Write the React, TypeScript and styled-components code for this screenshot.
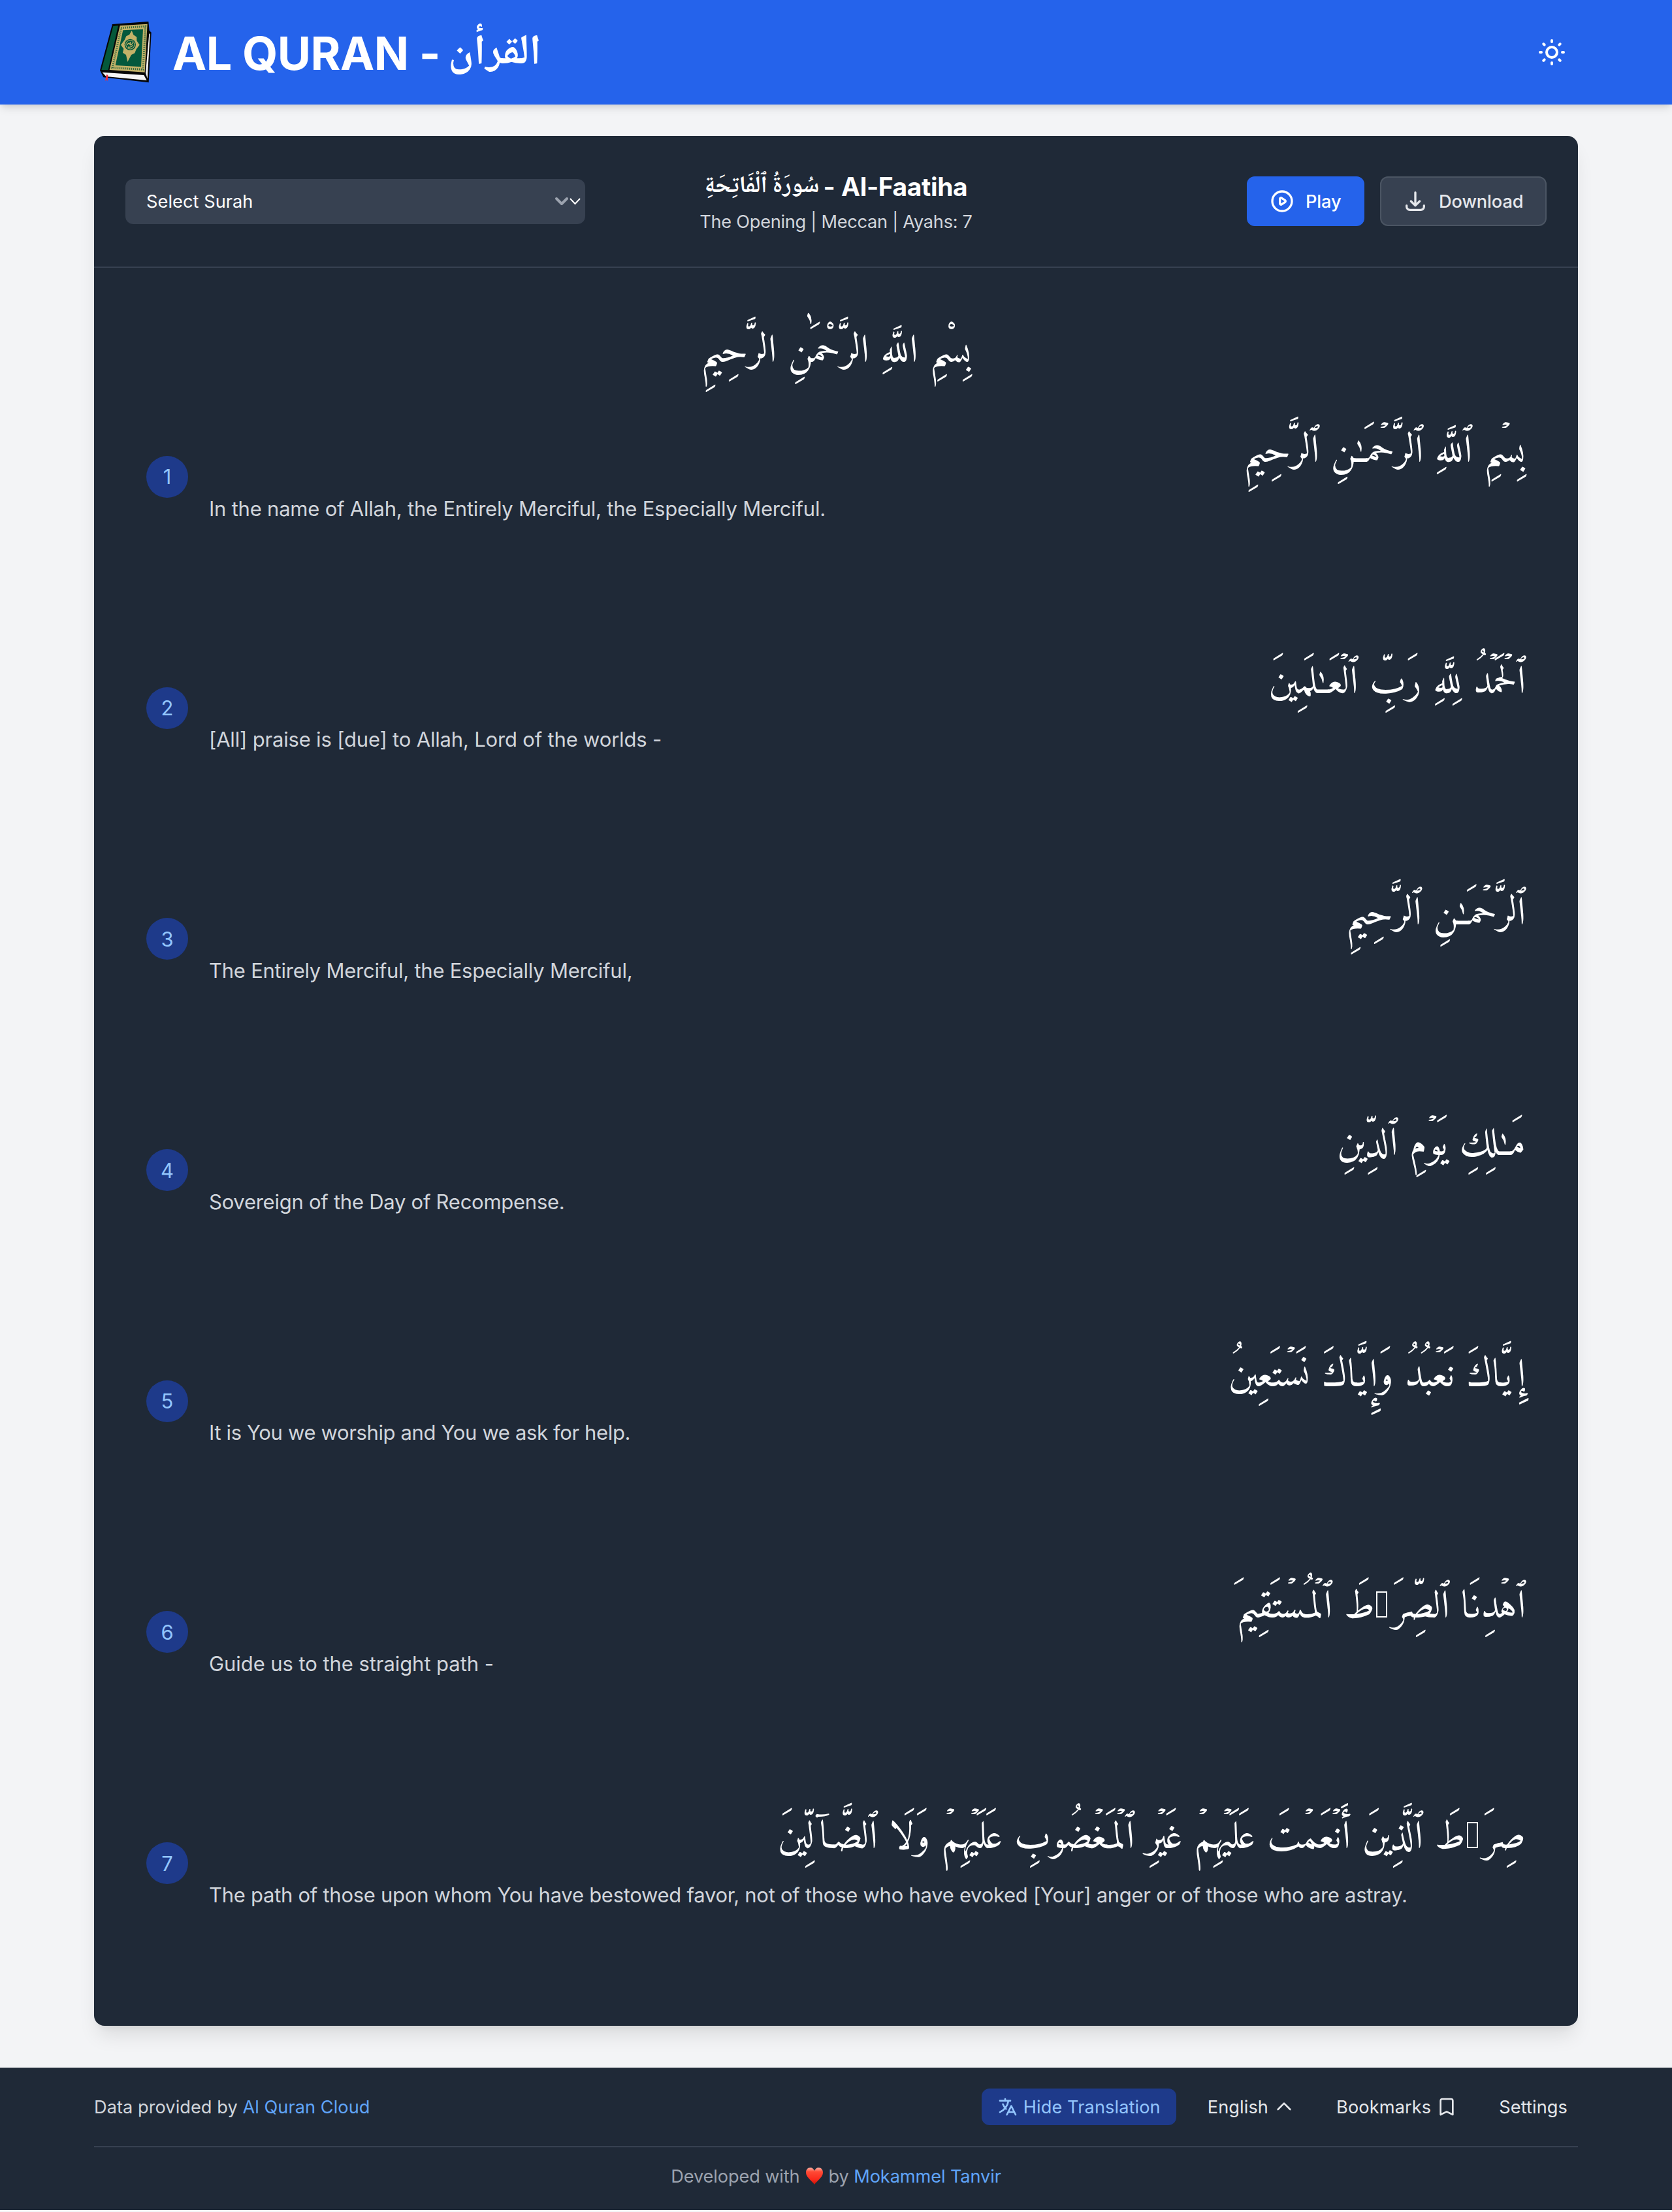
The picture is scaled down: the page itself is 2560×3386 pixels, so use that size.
import React from "react";
import styled, { createGlobalStyle } from "styled-components";

const sans = `Inter, "Noto Sans", "DejaVu Sans", sans-serif`;
const naskh = `"Amiri", "Scheherazade New", "DejaVu Sans", serif`;
const headingArabic = `"Geeza Pro", "Noto Naskh Arabic", "Noto Sans Arabic", "DejaVu Sans", sans-serif`;

const GlobalStyle = createGlobalStyle`
  *, *::before, *::after { box-sizing: border-box; }
  body { margin: 0; background: #f3f4f6; font-family: ${sans}; }
  button, h1, h2, p { margin: 0; font: inherit; letter-spacing: inherit; }
`;

const Page = styled.div`
  height: 3386px;
  display: flex;
  flex-direction: column;
`;

const Header = styled.header`
  height: 160px;
  flex: none;
  padding: 0 144px;
  display: flex;
  align-items: center;
  justify-content: space-between;
  background: #2563eb;
  color: #fff;
  box-shadow: 0 8px 12px -2px rgba(0, 0, 0, 0.1), 0 4px 8px -4px rgba(0, 0, 0, 0.1);
`;

const Brand = styled.div`
  display: flex;
  align-items: center;
  gap: 24px;
`;

const Logo = styled.svg`
  width: 96px;
  height: 96px;
`;

const SiteTitle = styled.h1`
  height: 80px;
  padding-top: 2px;
  font-size: 70px;
  line-height: 80px;
  font-weight: 700;
  letter-spacing: -0.5px;
  white-space: nowrap;
`;

const SiteTitleArabic = styled.span`
  margin-left: -4px;
  font-family: ${headingArabic};
  font-size: 65px;
  line-height: 0;
  letter-spacing: 0;
  vertical-align: 9px;
`;

const IconButton = styled.button`
  display: flex;
  padding: 16px;
  border: 0;
  background: none;
  color: inherit;
`;

const StrokeIcon = styled.svg<{ $size: number }>`
  width: ${(p) => p.$size}px;
  height: ${(p) => p.$size}px;
  flex: none;
  fill: none;
  stroke: currentColor;
  stroke-width: 2;
  stroke-linecap: round;
  stroke-linejoin: round;
`;

const Card = styled.main`
  height: 2893px;
  flex: none;
  margin: 48px 144px 64px;
  border-radius: 16px;
  background: #1f2937;
  color: #fff;
  box-shadow: 0 20px 30px -6px rgba(0, 0, 0, 0.1), 0 8px 12px -8px rgba(0, 0, 0, 0.1);
`;

const Toolbar = styled.div`
  height: 202px;
  padding: 0 48px;
  display: grid;
  grid-template-columns: 704px 1fr 704px;
  align-items: center;
  border-bottom: 2px solid #374151;
`;

const SelectBox = styled.div`
  height: 69px;
  padding: 0 7px 0 32px;
  display: flex;
  align-items: center;
  justify-content: space-between;
  border-radius: 12px;
  background: #374151;
  font-size: 27.2px;
  letter-spacing: 0.05px;
`;

const Chevrons = styled.svg`
  width: 40px;
  height: 14px;
  fill: none;
`;

const SurahHeading = styled.div`
  padding-top: 4px;
  display: flex;
  flex-direction: column;
  align-items: center;
`;

const SurahName = styled.h2`
  height: 56px;
  font-size: 39px;
  line-height: 56px;
  font-weight: 700;
  letter-spacing: -0.4px;
  white-space: nowrap;
`;

const SurahArabic = styled.span`
  margin-right: -3px;
  font-family: ${headingArabic};
  font-size: 36px;
  line-height: 0;
  letter-spacing: 0;
  vertical-align: 6px;
`;

const SurahMeta = styled.p`
  margin-top: 4px;
  color: #d1d5db;
  font-size: 27.2px;
  line-height: 44px;
  letter-spacing: -0.28px;
  white-space: nowrap;
`;

const Actions = styled.div`
  display: flex;
  justify-content: flex-end;
  gap: 24px;
`;

const ActionButton = styled.button<{ $primary?: boolean; $width: number }>`
  width: ${(p) => p.$width}px;
  height: 76px;
  padding: 0 0 0 32px;
  display: flex;
  align-items: center;
  gap: 16px;
  border: 2px solid ${(p) => (p.$primary ? "#2563eb" : "#4b5563")};
  border-radius: 12px;
  background: ${(p) => (p.$primary ? "#2563eb" : "#374151")};
  color: ${(p) => (p.$primary ? "#fff" : "#e5e7eb")};
  font-size: 27.2px;
  font-weight: 500;
  letter-spacing: -0.1px;
`;

const Basmala = styled.p`
  height: 143.15px;
  padding-top: 80px;
  text-align: center;
  font-family: ${naskh};
  font-size: 60px;
  line-height: 100px;
  white-space: nowrap;
`;

const VerseRow = styled.article`
  height: 353.7px;
  padding: 0 80px;
  display: grid;
  grid-template-columns: 64px 1fr;
  column-gap: 32px;
  align-items: center;
`;

const VerseNumber = styled.div`
  width: 64px;
  height: 64px;
  display: flex;
  align-items: center;
  justify-content: center;
  border-radius: 50%;
  background: #1e3a8a;
  color: #93c5fd;
  font-size: 31px;
`;

const VerseBody = styled.div`
  height: 353.7px;
  padding-top: 82px;
`;

const VerseArabic = styled.p`
  height: 117.5px;
  direction: rtl;
  font-family: ${naskh};
  font-size: 60px;
  line-height: 116px;
  white-space: nowrap;
`;

const MissingGlyph = styled.span`
  display: inline-block;
  width: 17px;
  height: 40px;
  margin: 0 8px 0 2px;
  border: 2px solid #fff;
`;

const Translation = styled.p<{ $tracking: number }>`
  color: #d1d5db;
  font-size: 31px;
  line-height: 52px;
  letter-spacing: ${(p) => p.$tracking}px;
  white-space: nowrap;
`;

const Footer = styled.footer`
  height: 218px;
  flex: none;
  padding: 0 144px;
  background: #1f2937;
  color: #e5e7eb;
  font-size: 27.2px;
`;

const FooterTop = styled.div`
  height: 122px;
  display: flex;
  align-items: center;
  justify-content: space-between;
  border-bottom: 2px solid #374151;
`;

const Credit = styled.p`
  color: #d1d5db;
  letter-spacing: 0.04px;
`;

const Link = styled.a`
  color: #60a5fa;
`;

const FooterNav = styled.nav`
  display: flex;
  align-items: center;
  gap: 32px;
  letter-spacing: 0.09px;
`;

const NavButton = styled.button<{ $active?: boolean }>`
  height: 56px;
  padding: 0 ${(p) => (p.$active ? 24 : 16)}px;
  display: flex;
  align-items: center;
  gap: 8px;
  border: 0;
  border-radius: 12px;
  background: ${(p) => (p.$active ? "#1e3a8a" : "transparent")};
  color: ${(p) => (p.$active ? "#93c5fd" : "#e5e7eb")};
`;

const FooterBottom = styled.div`
  height: 88px;
  display: flex;
  align-items: center;
  justify-content: center;
  gap: 8px;
  color: #9ca3af;
  letter-spacing: -0.12px;
`;

const Heart = styled.svg`
  width: 28px;
  height: 28px;
`;

const QuranLogo = () => (
  <Logo viewBox="0 0 96 96">
    <g transform="translate(-4 -8) scale(0.33333)">
      <path d="M96 39 262 27 266 68 275 77 263 307 55 283 39 251z" fill="#060606" />
      <path d="M100 48 123 46 77 250 46 249z" fill="#05583a" />
      <path d="M131 46 257 38 245 260 83 249z" fill="#c3b268" />
      <path d="M137 56 248 49 237 247 96 239z" fill="none" stroke="#35693f" strokeWidth="9" strokeDasharray="4 5" />
      <path d="M145 67 237 62 228 235 110 228z" fill="#04593d" />
      <path
        d="M185 68 193 88 208 98 208 115 221 134 206 154 199 172 183 180 166 212 159 180 144 170 148 152 135 134 152 112 160 94 174 88z"
        fill="#c3b268"
      />
      <circle cx="178" cy="133" r="26" fill="#04593d" />
      <circle cx="178" cy="133" r="20" fill="none" stroke="#c3b268" strokeWidth="3" />
      <path d="M164 135q6-14 12-4t14-8M168 144q12 4 22-8M178 120v14" fill="none" stroke="#c3b268" strokeWidth="4" />
      <path d="M50 260 241 273 254 297 67 279z" fill="#f6f6f6" />
      <path d="M265 82 269 84 257 289 249 263z" fill="#f6f6f6" />
      <path d="M69 270 76 272 74 300 69 294 63 300z" fill="#ef2b3a" />
    </g>
  </Logo>
);

const icons = {
  sun: "M12 3v1m0 16v1m9-9h-1M4 12H3m15.364 6.364l-.707-.707M6.343 6.343l-.707-.707m12.728 0l-.707.707M6.343 17.657l-.707.707M16 12a4 4 0 11-8 0 4 4 0 018 0z",
  play: "M14.752 11.168l-3.197-2.132A1 1 0 0010 9.87v4.263a1 1 0 001.555.832l3.197-2.132a1 1 0 000-1.664z M21 12a9 9 0 11-18 0 9 9 0 0118 0z",
  download: "M4 16v1a3 3 0 003 3h10a3 3 0 003-3v-1m-4-4l-4 4m0 0l-4-4m4 4V4",
  translate: "M3 5h12M9 3v2m1.048 9.5A18.022 18.022 0 016.412 9m6.088 9h7M11 21l5-10 5 10M12.751 5C11.783 10.77 8.07 15.61 3 18.129",
  up: "M5 15l7-7 7 7",
  bookmark: "M5 5a2 2 0 012-2h10a2 2 0 012 2v16l-7-3.5L5 21V5z",
};

const Icon = ({ name, size }: { name: keyof typeof icons; size: number }) => (
  <StrokeIcon $size={size} viewBox="0 0 24 24">
    <path d={icons[name]} />
  </StrokeIcon>
);

const verses: { arabic: React.ReactNode; english: string; tracking: number }[] = [
  {
    arabic: "بِسۡمِ ٱللَّهِ ٱلرَّحۡمَـٰنِ ٱلرَّحِيمِ",
    english: "In the name of Allah, the Entirely Merciful, the Especially Merciful.",
    tracking: -0.22,
  },
  {
    arabic: "ٱلۡحَمۡدُ لِلَّهِ رَبِّ ٱلۡعَـٰلَمِينَ",
    english: "[All] praise is [due] to Allah, Lord of the worlds -",
    tracking: -0.18,
  },
  { arabic: "ٱلرَّحۡمَـٰنِ ٱلرَّحِيمِ", english: "The Entirely Merciful, the Especially Merciful,", tracking: -0.25 },
  { arabic: "مَـٰلِكِ يَوۡمِ ٱلدِّينِ", english: "Sovereign of the Day of Recompense.", tracking: -0.26 },
  {
    arabic: "إِيَّاكَ نَعۡبُدُ وَإِيَّاكَ نَسۡتَعِينُ",
    english: "It is You we worship and You we ask for help.",
    tracking: -0.36,
  },
  {
    arabic: <>ٱهۡدِنَا ٱلصِّرَ<MissingGlyph />طَ ٱلۡمُسۡتَقِيمَ</>,
    english: "Guide us to the straight path -",
    tracking: -0.07,
  },
  {
    arabic: <>صِرَ<MissingGlyph />طَ ٱلَّذِينَ أَنۡعَمۡتَ عَلَيۡهِمۡ غَيۡرِ ٱلۡمَغۡضُوبِ عَلَيۡهِمۡ وَلَا ٱلضَّاۤلِّينَ</>,
    english: "The path of those upon whom You have bestowed favor, not of those who have evoked [Your] anger or of those who are astray.",
    tracking: -0.275,
  },
];

export default function App() {
  return (
    <Page>
      <GlobalStyle />
      <Header>
        <Brand>
          <QuranLogo />
          <SiteTitle>
            AL QURAN - <SiteTitleArabic>القرأن</SiteTitleArabic>
          </SiteTitle>
        </Brand>
        <IconButton>
          <Icon name="sun" size={48} />
        </IconButton>
      </Header>
      <Card>
        <Toolbar>
          <SelectBox>
            Select Surah
            <Chevrons viewBox="0 0 40 14">
              <path d="M3 3l8 8 8-8" stroke="#9ca3af" strokeWidth="4" strokeLinecap="round" strokeLinejoin="round" />
              <path d="M24 3l7.5 8L39 3" stroke="#fff" strokeWidth="2" />
            </Chevrons>
          </SelectBox>
          <SurahHeading>
            <SurahName>
              <SurahArabic>سُورَةُ ٱلْفَاتِحَةِ</SurahArabic> - Al-Faatiha
            </SurahName>
            <SurahMeta>The Opening | Meccan | Ayahs: 7</SurahMeta>
          </SurahHeading>
          <Actions>
            <ActionButton $primary $width={180}>
              <Icon name="play" size={40} />
              Play
            </ActionButton>
            <ActionButton $width={255}>
              <Icon name="download" size={40} />
              Download
            </ActionButton>
          </Actions>
        </Toolbar>
        <Basmala>بِسْمِ اللَّهِ الرَّحْمَٰنِ الرَّحِيمِ</Basmala>
        {verses.map((verse, index) => (
          <VerseRow key={index}>
            <VerseNumber>{index + 1}</VerseNumber>
            <VerseBody>
              <VerseArabic>{verse.arabic}</VerseArabic>
              <Translation $tracking={verse.tracking}>{verse.english}</Translation>
            </VerseBody>
          </VerseRow>
        ))}
      </Card>
      <Footer>
        <FooterTop>
          <Credit>
            Data provided by <Link>Al Quran Cloud</Link>
          </Credit>
          <FooterNav>
            <NavButton $active>
              <Icon name="translate" size={32} />
              Hide Translation
            </NavButton>
            <NavButton>
              English
              <Icon name="up" size={32} />
            </NavButton>
            <NavButton>
              Bookmarks
              <Icon name="bookmark" size={32} />
            </NavButton>
            <NavButton>Settings</NavButton>
          </FooterNav>
        </FooterTop>
        <FooterBottom>
          Developed with
          <Heart viewBox="0 0 28 28">
            <defs>
              <linearGradient id="heart" x1="0" y1="0" x2="0" y2="1">
                <stop offset="0" stopColor="#ffb3a6" />
                <stop offset="0.25" stopColor="#ff4a35" />
                <stop offset="0.7" stopColor="#fb2a1c" />
                <stop offset="1" stopColor="#c01208" />
              </linearGradient>
            </defs>
            <path d="M14 27C10 21 1 16 1 8.500C1 4 4 1 7.500 1C10.500 1 13 3 14 6C15 3 17.500 1 20.500 1C24 1 27 4 27 8.500C27 16 18 21 14 27Z" fill="url(#heart)" />
          </Heart>
          <span>
            by <Link>Mokammel Tanvir</Link>
          </span>
        </FooterBottom>
      </Footer>
    </Page>
  );
}
